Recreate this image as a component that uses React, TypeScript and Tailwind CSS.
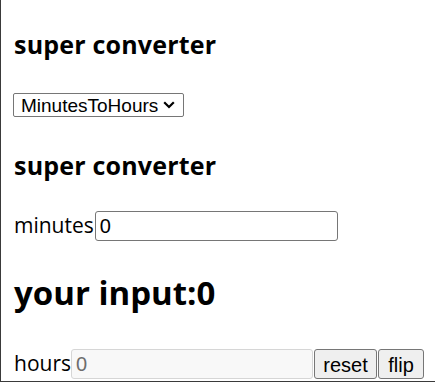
import type { ReactElement } from 'react'

const bodyFont = "font-['Open_Sans','Noto_Sans',sans-serif]"
const ctrlFont = "font-['Liberation_Sans',Arial,sans-serif]"

export default function App(): ReactElement {
  return (
    <div className="h-[382px] w-[438px] overflow-hidden bg-white">
      <div
        className={`flex h-[382px] w-[435px] flex-col border-b border-l border-[#3a3a3a] pl-[12px] text-black ${bodyFont}`}
      >
        <h3 className="mt-[28px] h-[32px] pl-[1px] text-[25px] leading-[32px] font-bold tracking-[0.2px]">
          super converter
        </h3>

        <div
          className={`mt-[33px] flex h-[24px] w-[171px] items-center justify-between rounded-[2px] border border-[#767676] bg-white pr-[8px] pl-[7px] text-[19px] leading-none ${ctrlFont}`}
        >
          <span>MinutesToHours</span>
          <svg width="12" height="8" viewBox="0 0 12 8" fill="none">
            <path d="M1.2 1.2 L6 6 L10.8 1.2" stroke="#000" strokeWidth="2.2" />
          </svg>
        </div>

        <h3 className="mt-[32px] h-[32px] pl-[1px] text-[25px] leading-[32px] font-bold tracking-[0.2px]">
          super converter
        </h3>

        <div className="mt-[30px] flex h-[30px] items-center">
          <label className="pl-[1px] text-[21px]">minutes</label>
          <div
            className={`ml-[1px] flex h-[30px] w-[243px] items-center rounded-[3px] border border-[#767676] px-[4px] text-[20px] ${ctrlFont}`}
          >
            0
          </div>
        </div>

        <h1 className="mt-[28px] h-[48px] pl-[1px] text-[33px] leading-[48px] font-bold">
          your input:0
        </h1>

        <div className="mt-[32px] flex h-[30px] items-center">
          <label className="pl-[1px] text-[21px]">hours</label>
          <div
            className={`flex h-[30px] w-[242px] items-center rounded-[3px] border border-[#d6d6d6] bg-[#f8f8f8] px-[4px] text-[20px] text-[#6d6d6d] ${ctrlFont}`}
          >
            0
          </div>
          <button
            type="button"
            className={`ml-[1px] h-[30px] w-[63px] rounded-[3px] border border-[#767676] bg-[#efefef] text-[20px] ${ctrlFont}`}
          >
            reset
          </button>
          <button
            type="button"
            className={`ml-[1px] h-[30px] w-[46px] rounded-[3px] border border-[#767676] bg-[#efefef] text-[20px] ${ctrlFont}`}
          >
            flip
          </button>
        </div>
      </div>
    </div>
  )
}
